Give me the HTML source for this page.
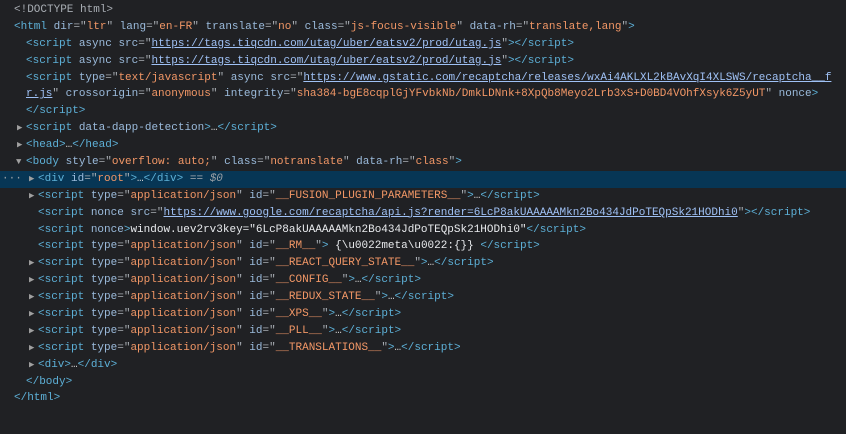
<!DOCTYPE html>
<html><head><style>
body{margin:0;background:#202124;width:846px;height:434px;overflow:hidden;font-family:"Liberation Mono","DejaVu Sans Mono",monospace;font-size:11px;color:#d5d5d5}
.c{position:absolute;left:0;top:2px;width:846px}
.l{height:16.9px;line-height:16.9px;white-space:pre;position:relative}
.t{color:#5db0d7}.n{color:#9bbbdc}.v{color:#f29766}.p{color:#a8adb3}.x{color:#e8eaed}
a{color:#9fc1f5;text-decoration:underline}
.ar{position:absolute;font-size:9px;color:#a0a0a0}
.sel{background:#073655}
.d{position:absolute;left:2px;color:#9aa0a6}
i{color:#9aa0a6}
</style></head><body><div class="c">
<div class="l" style="padding-left:14px"><span class="p">&lt;!DOCTYPE html&gt;</span></div>
<div class="l" style="padding-left:14px"><span class="t">&lt;html</span> <span class="n">dir</span><span class="p">="</span><span class="v">ltr</span><span class="p">"</span> <span class="n">lang</span><span class="p">="</span><span class="v">en-FR</span><span class="p">"</span> <span class="n">translate</span><span class="p">="</span><span class="v">no</span><span class="p">"</span> <span class="n">class</span><span class="p">="</span><span class="v">js-focus-visible</span><span class="p">"</span> <span class="n">data-rh</span><span class="p">="</span><span class="v">translate,lang</span><span class="p">"</span><span class="t">&gt;</span></div>
<div class="l" style="padding-left:26px"><span class="t">&lt;script</span> <span class="n">async</span> <span class="n">src</span><span class="p">="</span><a>https://tags.tiqcdn.com/utag/uber/eatsv2/prod/utag.js</a><span class="p">"</span><span class="t">&gt;&lt;/script&gt;</span></div>
<div class="l" style="padding-left:26px"><span class="t">&lt;script</span> <span class="n">async</span> <span class="n">src</span><span class="p">="</span><a>https://tags.tiqcdn.com/utag/uber/eatsv2/prod/utag.js</a><span class="p">"</span><span class="t">&gt;&lt;/script&gt;</span></div>
<div class="l" style="padding-left:26px"><span class="t">&lt;script</span> <span class="n">type</span><span class="p">="</span><span class="v">text/javascript</span><span class="p">"</span> <span class="n">async</span> <span class="n">src</span><span class="p">="</span><a>https://www.gstatic.com/recaptcha/releases/wxAi4AKLXL2kBAvXqI4XLSWS/recaptcha__f</a></div>
<div class="l" style="padding-left:26px"><a>r.js</a><span class="p">"</span> <span class="n">crossorigin</span><span class="p">="</span><span class="v">anonymous</span><span class="p">"</span> <span class="n">integrity</span><span class="p">="</span><span class="v">sha384-bgE8cqplGjYFvbkNb/DmkLDNnk+8XpQb8Meyo2Lrb3xS+D0BD4VOhfXsyk6Z5yUT</span><span class="p">"</span> <span class="n">nonce</span><span class="t">&gt;</span></div>
<div class="l" style="padding-left:26px"><span class="t">&lt;/script&gt;</span></div>
<div class="l" style="padding-left:26px"><span class="ar" style="left:17px">▶</span><span class="t">&lt;script</span> <span class="n">data-dapp-detection</span><span class="t">&gt;</span>…<span class="t">&lt;/script&gt;</span></div>
<div class="l" style="padding-left:26px"><span class="ar" style="left:17px">▶</span><span class="t">&lt;head&gt;</span>…<span class="t">&lt;/head&gt;</span></div>
<div class="l" style="padding-left:26px"><span class="ar" style="left:16px">▼</span><span class="t">&lt;body</span> <span class="n">style</span><span class="p">="</span><span class="v">overflow: auto;</span><span class="p">"</span> <span class="n">class</span><span class="p">="</span><span class="v">notranslate</span><span class="p">"</span> <span class="n">data-rh</span><span class="p">="</span><span class="v">class</span><span class="p">"</span><span class="t">&gt;</span></div>
<div class="l sel" style="padding-left:38px"><span class="d">···</span><span class="ar" style="left:29px">▶</span><span class="t">&lt;div</span> <span class="n">id</span><span class="p">="</span><span class="v">root</span><span class="p">"</span><span class="t">&gt;</span>…<span class="t">&lt;/div&gt;</span> <span class="p">==</span> <i>$0</i></div>
<div class="l" style="padding-left:38px"><span class="ar" style="left:29px">▶</span><span class="t">&lt;script</span> <span class="n">type</span><span class="p">="</span><span class="v">application/json</span><span class="p">"</span> <span class="n">id</span><span class="p">="</span><span class="v">__FUSION_PLUGIN_PARAMETERS__</span><span class="p">"</span><span class="t">&gt;</span>…<span class="t">&lt;/script&gt;</span></div>
<div class="l" style="padding-left:38px"><span class="t">&lt;script</span> <span class="n">nonce</span> <span class="n">src</span><span class="p">="</span><a>https://www.google.com/recaptcha/api.js?render=6LcP8akUAAAAAMkn2Bo434JdPoTEQpSk21HODhi0</a><span class="p">"</span><span class="t">&gt;&lt;/script&gt;</span></div>
<div class="l" style="padding-left:38px"><span class="t">&lt;script</span> <span class="n">nonce</span><span class="t">&gt;</span><span class="x">window.uev2rv3key="6LcP8akUAAAAAMkn2Bo434JdPoTEQpSk21HODhi0"</span><span class="t">&lt;/script&gt;</span></div>
<div class="l" style="padding-left:38px"><span class="t">&lt;script</span> <span class="n">type</span><span class="p">="</span><span class="v">application/json</span><span class="p">"</span> <span class="n">id</span><span class="p">="</span><span class="v">__RM__</span><span class="p">"</span><span class="t">&gt;</span> <span class="x">{\u0022meta\u0022:{}}</span> <span class="t">&lt;/script&gt;</span></div>
<div class="l" style="padding-left:38px"><span class="ar" style="left:29px">▶</span><span class="t">&lt;script</span> <span class="n">type</span><span class="p">="</span><span class="v">application/json</span><span class="p">"</span> <span class="n">id</span><span class="p">="</span><span class="v">__REACT_QUERY_STATE__</span><span class="p">"</span><span class="t">&gt;</span>…<span class="t">&lt;/script&gt;</span></div>
<div class="l" style="padding-left:38px"><span class="ar" style="left:29px">▶</span><span class="t">&lt;script</span> <span class="n">type</span><span class="p">="</span><span class="v">application/json</span><span class="p">"</span> <span class="n">id</span><span class="p">="</span><span class="v">__CONFIG__</span><span class="p">"</span><span class="t">&gt;</span>…<span class="t">&lt;/script&gt;</span></div>
<div class="l" style="padding-left:38px"><span class="ar" style="left:29px">▶</span><span class="t">&lt;script</span> <span class="n">type</span><span class="p">="</span><span class="v">application/json</span><span class="p">"</span> <span class="n">id</span><span class="p">="</span><span class="v">__REDUX_STATE__</span><span class="p">"</span><span class="t">&gt;</span>…<span class="t">&lt;/script&gt;</span></div>
<div class="l" style="padding-left:38px"><span class="ar" style="left:29px">▶</span><span class="t">&lt;script</span> <span class="n">type</span><span class="p">="</span><span class="v">application/json</span><span class="p">"</span> <span class="n">id</span><span class="p">="</span><span class="v">__XPS__</span><span class="p">"</span><span class="t">&gt;</span>…<span class="t">&lt;/script&gt;</span></div>
<div class="l" style="padding-left:38px"><span class="ar" style="left:29px">▶</span><span class="t">&lt;script</span> <span class="n">type</span><span class="p">="</span><span class="v">application/json</span><span class="p">"</span> <span class="n">id</span><span class="p">="</span><span class="v">__PLL__</span><span class="p">"</span><span class="t">&gt;</span>…<span class="t">&lt;/script&gt;</span></div>
<div class="l" style="padding-left:38px"><span class="ar" style="left:29px">▶</span><span class="t">&lt;script</span> <span class="n">type</span><span class="p">="</span><span class="v">application/json</span><span class="p">"</span> <span class="n">id</span><span class="p">="</span><span class="v">__TRANSLATIONS__</span><span class="p">"</span><span class="t">&gt;</span>…<span class="t">&lt;/script&gt;</span></div>
<div class="l" style="padding-left:38px"><span class="ar" style="left:29px">▶</span><span class="t">&lt;div&gt;</span>…<span class="t">&lt;/div&gt;</span></div>
<div class="l" style="padding-left:26px"><span class="t">&lt;/body&gt;</span></div>
<div class="l" style="padding-left:14px"><span class="t">&lt;/html&gt;</span></div>
</div></body></html>
